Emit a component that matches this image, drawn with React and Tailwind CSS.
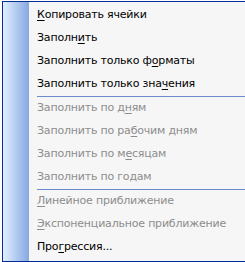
import React from "react";

// [before, underlined letter, after]
const items = [
  { parts: ["", "К", "опировать ячейки"] },
  { parts: ["Заполн", "и", "ть"] },
  { parts: ["Заполнить только ф", "о", "рматы"] },
  { parts: ["Заполнить только зна", "ч", "ения"], sepAfter: true },
  { parts: ["Заполнить по д", "н", "ям"], disabled: true },
  { parts: ["Заполнить по ра", "б", "очим дням"], disabled: true },
  { parts: ["Заполнить по м", "е", "сяцам"], disabled: true },
  { parts: ["Заполнить по годам", "", ""], disabled: true, sepAfter: true },
  { parts: ["", "Л", "инейное приближение"], disabled: true },
  { parts: ["", "Э", "кспоненциальное приближение"], disabled: true },
  { parts: ["Про", "г", "рессия..."] },
];

const MenuItem = ({ item }) => {
  const [before, key, after] = item.parts;
  return (
    <div
      className={
        item.disabled
          ? "h-[23px] flex items-center pl-[8px] whitespace-nowrap text-[#8d8d8d]"
          : "h-[23px] flex items-center pl-[8px] whitespace-nowrap text-black"
      }
    >
      <span>
        {before}
        {key && <span className="underline underline-offset-2">{key}</span>}
        {after}
      </span>
    </div>
  );
};

export default function App() {
  return (
    <div className="w-[245px] h-[262px] overflow-hidden bg-white">
      <div
        className="mt-[1px] ml-[2px] w-[270px] h-[261px] flex border-y border-l border-[#002d96] bg-[#f6f6f6] text-[11px] tracking-[-0.2px]"
        style={{ fontFamily: '"DejaVu Sans", sans-serif' }}
      >
        {/* Left side */}
        <div className="w-[26px] shrink-0 bg-linear-to-r from-[#e3efff] to-[#87a8e0]" />

        {/* Items */}
        <div className="flex-1 flex flex-col pt-[2px]">
          {items.map((item, index) => (
            <div key={index}>
              <MenuItem item={item} />
              {item.sepAfter && (
                <div className="pl-[8px]">
                  <div className="h-[1px] w-full bg-[#6a8ccb]" />
                </div>
              )}
            </div>
          ))}
        </div>
      </div>
    </div>
  );
}
